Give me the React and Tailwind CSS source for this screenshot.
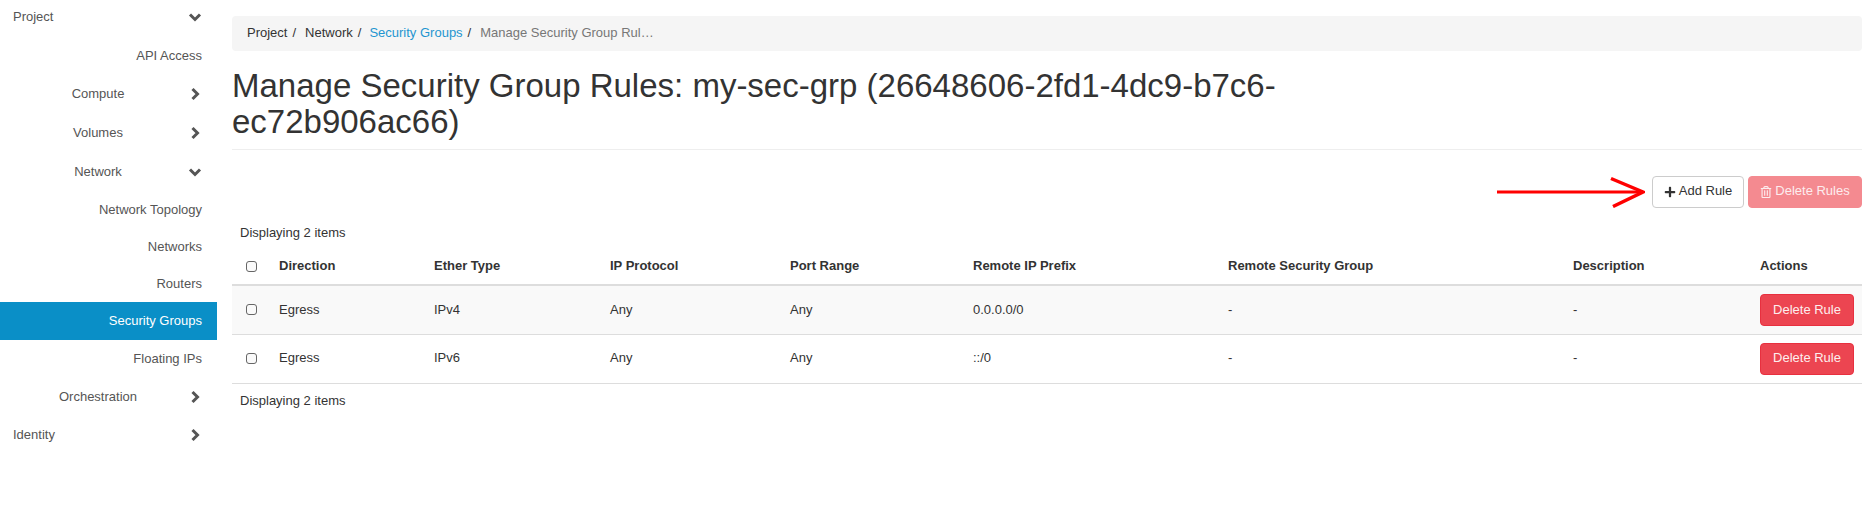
import { FaPlus, FaRegTrashAlt } from "react-icons/fa";

const NAV = [
  { label: "Project", kind: "top", open: true, box: "h-[34px]" },
  { label: "API Access", kind: "child", box: "mt-[3px] h-[38px]" },
  { label: "Compute", kind: "group", box: "h-[38px]" },
  { label: "Volumes", kind: "group", box: "h-[40px]" },
  { label: "Network", kind: "group", open: true, box: "h-[38px]" },
  { label: "Network Topology", kind: "child", box: "h-[38px]" },
  { label: "Networks", kind: "child", box: "h-[37px]" },
  { label: "Routers", kind: "child", box: "h-[36px]" },
  { label: "Security Groups", kind: "child", active: true, box: "h-[38px]" },
  { label: "Floating IPs", kind: "child", box: "h-[38px]" },
  { label: "Orchestration", kind: "group", box: "h-[38px]" },
  { label: "Identity", kind: "top", box: "h-[38px]" },
];

const COLUMNS = [
  { label: "Direction", width: "w-[155px]" },
  { label: "Ether Type", width: "w-[176px]" },
  { label: "IP Protocol", width: "w-[180px]" },
  { label: "Port Range", width: "w-[183px]" },
  { label: "Remote IP Prefix", width: "w-[255px]" },
  { label: "Remote Security Group", width: "w-[345px]" },
  { label: "Description", width: "w-[187px]" },
  { label: "Actions", width: "" },
];

const RULES = [
  { ether: "IPv4", prefix: "0.0.0.0/0", striped: true },
  { ether: "IPv6", prefix: "::/0", striped: false },
];

function Chevron({ open }) {
  return (
    <svg width="14" height="14" viewBox="0 0 14 14" fill="none" stroke="#555" strokeWidth="3">
      <path d={open ? "M2 4.5L7 9.5L12 4.5" : "M4.5 2L9.5 7L4.5 12"} />
    </svg>
  );
}

function NavItem({ item }) {
  if (item.kind === "child") {
    return (
      <a
        className={`${item.box} flex items-center justify-end pr-[15px] ${
          item.active ? "bg-[#0a8fc7] text-white" : "text-[#555]"
        }`}
      >
        {item.label}
      </a>
    );
  }
  return (
    <a className={`${item.box} flex items-center pl-[13px] pr-[15px] text-[#555]`}>
      <span className={`flex-1 ${item.kind === "group" ? "text-center" : ""}`}>{item.label}</span>
      <span className="w-[19px] flex justify-end">
        <Chevron open={item.open} />
      </span>
    </a>
  );
}

function Checkbox() {
  return <span className="block w-[11px] h-[11px] mx-auto border border-[#666] rounded-[3px] bg-[#fafafa]" />;
}

export default function App() {
  return (
    <div className="flex w-[1875px] h-[528px] bg-white font-['Liberation_Sans',Arial,sans-serif] text-[13px] leading-[18.5px] text-[#333] overflow-hidden">
      <nav className="w-[217px] shrink-0 flex flex-col">
        {NAV.map((item) => (
          <NavItem key={item.label} item={item} />
        ))}
      </nav>

      <main className="flex-1 min-w-0 pl-[15px] pr-[13px] pt-[16px]">
        {/* Breadcrumb */}
        <ol className="h-[35px] px-[15px] flex items-center bg-[#f5f5f5] rounded-[4px]">
          <li>Project</li>
          <li className="pl-[5px] pr-[9px]">/</li>
          <li>Network</li>
          <li className="pl-[5px] pr-[8px]">/</li>
          <li className="text-[#1f96d0]">Security Groups</li>
          <li className="pl-[5px] pr-[9px]">/</li>
          <li className="text-[#777]">Manage Security Group Rul…</li>
        </ol>

        {/* Title */}
        <h1 className="mt-[17px] pb-[8px] border-b border-[#eee] text-[33px] leading-[36.3px] font-normal">
          Manage Security Group Rules: my-sec-grp (26648606-2fd1-4dc9-b7c6-
          <br />
          ec72b906ac66)
        </h1>

        {/* Table actions */}
        <div className="mt-[26px] flex items-center justify-end gap-[4px]">
          <svg width="148" height="32" viewBox="0 0 148 32" className="mr-[3px]" fill="none" stroke="#f00">
            <path d="M0 16H146" strokeWidth="3" />
            <path d="M114 2.5L146 16L116 30.5" strokeWidth="3.5" />
          </svg>
          <button className="h-[32px] w-[92px] flex items-center justify-center gap-[3px] border border-[#ccc] rounded-[4px] bg-white">
            <FaPlus size={12} />
            Add Rule
          </button>
          <button className="h-[32px] w-[114px] flex items-center justify-center gap-[3px] border border-[#f48a90] rounded-[4px] bg-[#f48a90] text-[#fdecee]">
            <FaRegTrashAlt size={12} />
            Delete Rules
          </button>
        </div>

        <p className="mt-[16px] pl-[8px]">Displaying 2 items</p>

        <table className="mt-[7px] w-full table-fixed border-collapse">
          <thead>
            <tr className="h-[36px] border-b-[2px] border-[#ddd]">
              <th className="w-[39px]">
                <Checkbox />
              </th>
              {COLUMNS.map((col) => (
                <th key={col.label} className={`${col.width} px-[8px] text-left font-bold`}>
                  {col.label}
                </th>
              ))}
            </tr>
          </thead>
          <tbody>
            {RULES.map((rule) => (
              <tr key={rule.ether} className={`h-[49px] border-b border-[#ddd] ${rule.striped ? "bg-[#f9f9f9]" : ""}`}>
                <td>
                  <Checkbox />
                </td>
                <td className="px-[8px]">Egress</td>
                <td className="px-[8px]">{rule.ether}</td>
                <td className="px-[8px]">Any</td>
                <td className="px-[8px]">Any</td>
                <td className="px-[8px]">{rule.prefix}</td>
                <td className="px-[8px]">-</td>
                <td className="px-[8px]">-</td>
                <td className="px-[8px]">
                  <button className="h-[32px] w-[94px] border border-[#e8303f] rounded-[4px] bg-[#ec4551] text-[#fdeeee]">
                    Delete Rule
                  </button>
                </td>
              </tr>
            ))}
          </tbody>
        </table>

        <p className="mt-[8px] pl-[8px]">Displaying 2 items</p>
      </main>
    </div>
  );
}
